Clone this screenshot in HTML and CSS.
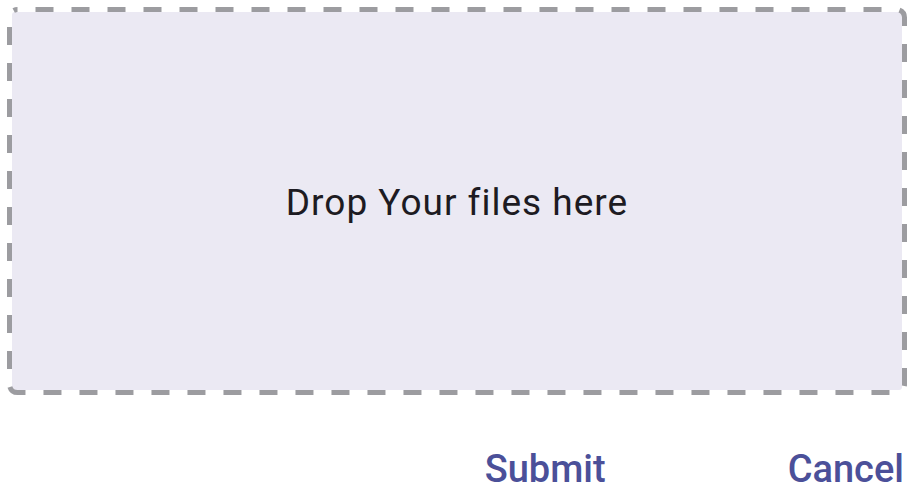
FILE: index.html
```html
<!DOCTYPE html>
<html>
<head>
<meta charset="utf-8">
<link rel="stylesheet" href="styles.css">
</head>
<body>
<div class="page">
  <div class="dropzone">
    <svg class="dash" width="900" height="388" viewBox="0 0 900 388">
      <rect x="2.5" y="2.5" width="895" height="383" rx="8" ry="8" fill="none" stroke="#9c9ca0" stroke-width="5" stroke-dasharray="18 18" stroke-dashoffset="18"/>
    </svg>
    <span class="label">Drop Your files here</span>
  </div>
  <div class="actions">
    <button class="btn">Submit</button>
    <button class="btn">Cancel</button>
  </div>
</div>
</body>
</html>
```
FILE: styles.css
```css
html, body {
  margin: 0;
  padding: 0;
  background: #ffffff;
}
.page {
  width: 912px;
  height: 503px;
  padding: 7px 5px 0 7px;
  box-sizing: border-box;
  font-family: Roboto, "Noto Sans", sans-serif;
}
.dropzone {
  position: relative;
  width: 900px;
  height: 388px;
  box-sizing: border-box;
  border: 5px solid transparent;
  border-radius: 8px;
  background: #ebe9f3;
  background-clip: padding-box;
  display: flex;
  align-items: center;
  justify-content: center;
}
.dash {
  position: absolute;
  left: -5px;
  top: -5px;
}
.label {
  font-size: 37px;
  color: #1d1b22;
  letter-spacing: 1px;
  margin-top: 2px;
}
.actions {
  display: flex;
  justify-content: flex-end;
  gap: 182px;
  margin-top: 55px;
  padding-right: 3px;
}
.btn {
  font-family: Roboto, "Noto Sans", sans-serif;
  font-weight: 500;
  font-size: 38px;
  color: #4b5099;
  background: none;
  border: none;
  padding: 0;
  line-height: 1;
}
```
